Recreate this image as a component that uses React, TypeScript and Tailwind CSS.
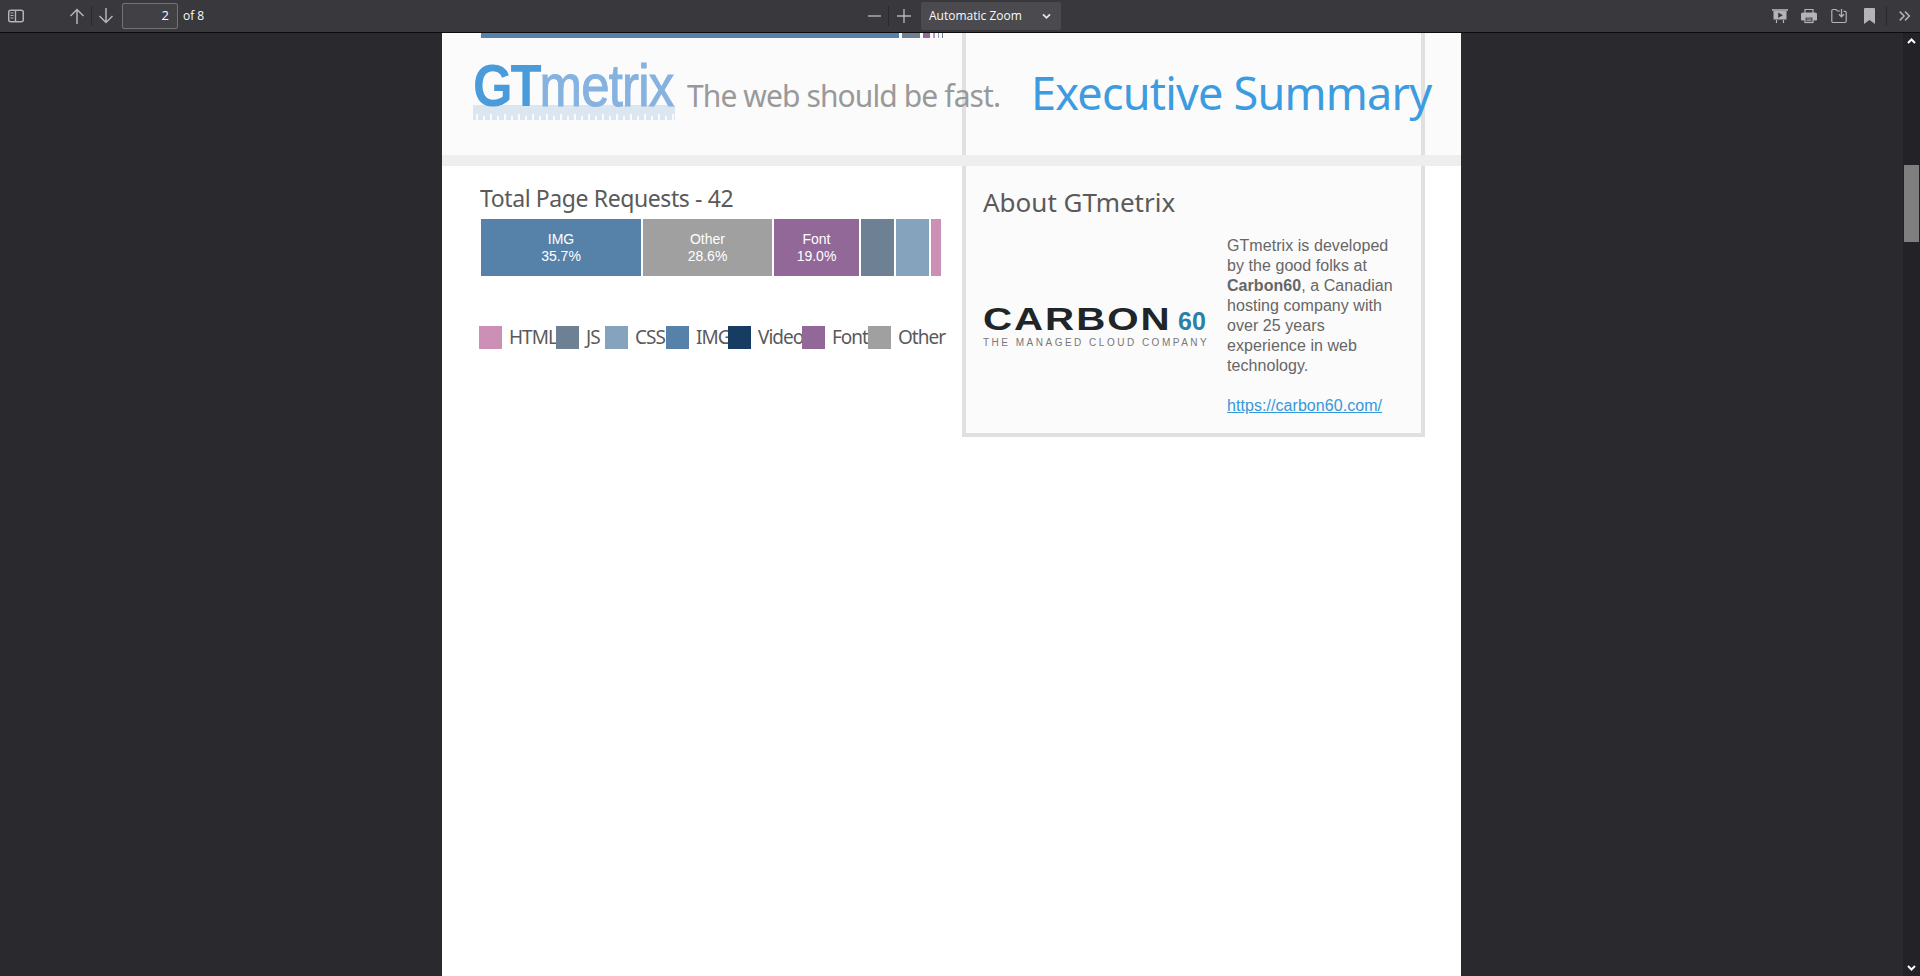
const headingFont = "font-['Noto_Sans',sans-serif]"

const barSegments = [
  { label: 'IMG', pct: '35.7%', color: 'bg-[#5682a9]', width: 'w-[162px]' },
  { label: 'Other', pct: '28.6%', color: 'bg-[#a0a0a0]', width: 'w-[131px]' },
  { label: 'Font', pct: '19.0%', color: 'bg-[#926899]', width: 'w-[87px]' },
  { label: '', pct: '', color: 'bg-[#6e8094]', width: 'w-[35px]' },
  { label: '', pct: '', color: 'bg-[#85a3bc]', width: 'w-[35px]' },
  { label: '', pct: '', color: 'bg-[#cc8fb5]', width: 'w-[10px]' },
]

const legend = [
  { label: 'HTML', color: 'bg-[#cc8fb5]', width: 'w-[47px]' },
  { label: 'JS', color: 'bg-[#6e8094]', width: 'w-[19px]' },
  { label: 'CSS', color: 'bg-[#85a3bc]', width: 'w-[31px]' },
  { label: 'IMG', color: 'bg-[#5682a9]', width: 'w-[32px]' },
  { label: 'Video', color: 'bg-[#173c61]', width: 'w-[44px]' },
  { label: 'Font', color: 'bg-[#926899]', width: 'w-[36px]' },
  { label: 'Other', color: 'bg-[#a0a0a0]', width: 'w-[46px]' },
]

function Icon({ children, className = '' }: { children: React.ReactNode; className?: string }) {
  return (
    <svg viewBox="0 0 16 16" className={`w-4 h-4 shrink-0 text-[#b4b4b6] ${className}`} fill="none" stroke="currentColor" strokeWidth="1.2">
      {children}
    </svg>
  )
}

function Toolbar() {
  return (
    <div className="h-[33px] shrink-0 flex items-center bg-[#38383d] border-b border-[#0c0c0d] relative text-[#f9f9fa] text-xs font-['Open_Sans',sans-serif]">
      <div className="flex items-center flex-1">
        <Icon className="ml-2">
          <rect x="0.7" y="2.2" width="14.6" height="11.6" rx="2" strokeWidth="1.5" />
          <path d="M7.5 2.2v11.6" strokeWidth="1.4" />
          <path d="M2.500 5h3M2.500 7.500h3M2.500 10h3" strokeWidth="1.1" />
        </Icon>
        <Icon className="ml-[45px]">
          <path d="M8 16V1.500M1.500 8 8 1.500 14.500 8" strokeWidth="1.5" />
        </Icon>
        <div className="w-px h-5 bg-[#2a2a2e] mx-[6px]" />
        <Icon>
          <path d="M8 0v14.500M1.500 8 8 14.500 14.500 8" strokeWidth="1.5" />
        </Icon>
        <div className="ml-2 w-[56px] h-[26px] border border-[#737373] rounded-[2px] bg-[#404045] flex items-center justify-end pr-2 text-[13px]">2</div>
        <span className="ml-[5px]">of 8</span>
      </div>

      <div className="absolute left-[867px] top-0 h-full flex items-center">
        <Icon>
          <path d="M1 8h13" strokeWidth="1.4" />
        </Icon>
        <div className="w-px h-5 bg-[#2a2a2e] ml-[5px] mr-[7px]" />
        <Icon>
          <path d="M1 8h14M8 1v14" strokeWidth="1.4" />
        </Icon>
        <div className="ml-[9px] w-[140px] h-[28px] bg-[#4a4a4f] rounded-[2px] flex items-center justify-between pl-2 pr-[10px]">
          <span>Automatic Zoom</span>
          <svg viewBox="0 0 10 8" className="w-[9px] h-[7px] text-[#e8e8e8]" fill="none" stroke="currentColor" strokeWidth="2">
            <path d="M1 1.500 5 5.500l4-4" />
          </svg>
        </div>
      </div>

      <div className="flex items-center pr-[8px]">
        <Icon className="mr-[13px]">
          <path d="M0 2h16" strokeWidth="1.6" />
          <rect x="1.500" y="3" width="13" height="8.500" fill="currentColor" stroke="none" />
          <path d="M6.200 4.500v5.500l4.600-2.700z" fill="#38383d" stroke="none" />
          <path d="M4.500 12v3M11.500 12v3" strokeWidth="1.2" />
        </Icon>
        <Icon className="mr-[14px]">
          <path d="M4 5V1.500h8V5" />
          <path d="M3.500 12H1.500a1 1 0 0 1-1-1V6.500a1.500 1.500 0 0 1 1.500-1.500h12a1.500 1.500 0 0 1 1.500 1.500V11a1 1 0 0 1-1 1h-2" fill="currentColor" />
          <rect x="4" y="9" width="8" height="5.500" fill="#38383d" />
          <path d="M5.500 11h5M5.500 12.700h5" strokeWidth="0.9" />
        </Icon>
        <Icon className="mr-[17px]">
          <path d="M9 3H6.500L5 1.500H2a1.200 1.200 0 0 0-1.200 1.200v10.600A1.200 1.200 0 0 0 2 14.500h12a1.200 1.200 0 0 0 1.200-1.200V4.500A1.200 1.200 0 0 0 14 3.300h-1.500" />
          <path d="M10.500 1v7.500M8 6.200l2.500 2.600L13 6.200" strokeWidth="1.3" />
        </Icon>
        <svg viewBox="0 0 11 16" className="w-[11px] h-4 text-[#b4b4b6] mr-[11px]" fill="currentColor">
          <path d="M0 1a1 1 0 0 1 1-1h9a1 1 0 0 1 1 1v15l-5.500-4L0 16z" />
        </svg>
        <div className="w-px h-5 bg-[#2a2a2e] mr-[11px]" />
        <Icon className="w-[14px]">
          <path d="M2 3l5 5-5 5M8 3l5 5-5 5" strokeWidth="1.7" />
        </Icon>
      </div>
    </div>
  )
}

function Scrollbar() {
  return (
    <div className="w-[17px] shrink-0 bg-[#232327] flex flex-col items-center justify-between relative">
      <svg viewBox="0 0 9 6" className="w-[9px] h-[6px] mt-[5px] text-white" fill="none" stroke="currentColor" strokeWidth="2">
        <path d="M1 5l3.500-3.500L8 5" />
      </svg>
      <div className="absolute top-[132px] left-px w-[15px] h-[77px] bg-[#7f7f7f]" />
      <svg viewBox="0 0 9 6" className="w-[9px] h-[6px] mb-[5px] text-white" fill="none" stroke="currentColor" strokeWidth="2">
        <path d="M1 1l3.500 3.500L8 1" />
      </svg>
    </div>
  )
}

function GtmetrixLogo() {
  return (
    <div className="w-[202px] h-[62px] shrink-0 relative font-['Liberation_Sans',sans-serif]">
      <svg viewBox="0 0 202 15" className="absolute left-0 bottom-0 w-[202px] h-[15px]">
        <rect width="202" height="15" fill="#dbe6f1" />
        {Array.from({ length: 29 }, (_, i) => (
          <rect key={i} x={3 + i * 7} y={i % 2 ? 11 : 9} width="2" height={i % 2 ? 4 : 6} fill="#fbfbfb" />
        ))}
      </svg>
      <div className="relative text-[60px] leading-[56px] whitespace-nowrap origin-left scale-x-[0.85]">
        <span className="font-bold tracking-[-2.5px] text-[#4a9bd9]">GT</span>
        <span className="tracking-[-1px] text-[#86b2e0] [-webkit-text-stroke:1px_#86b2e0]">metrix</span>
      </div>
    </div>
  )
}

function CarbonLogo() {
  return (
    <div className="w-[225px] shrink-0 font-['Liberation_Sans',sans-serif]">
      <div className="flex items-baseline h-[28px] leading-none whitespace-nowrap font-bold">
        <span className="inline-block w-[195px] text-[31px] tracking-[1.5px] text-[#222528] origin-left scale-x-[1.3]">CARBON</span>
        <span className="text-[25px] text-[#2b80a6]">60</span>
      </div>
      <div className="mt-[5px] text-[10px] leading-[11px] tracking-[2.5px] text-[#777] whitespace-nowrap">
        THE MANAGED CLOUD COMPANY
      </div>
    </div>
  )
}

function ReportHeader() {
  return (
    <div className="h-[133px] shrink-0 relative bg-[#fbfbfb] border-b-[11px] border-[#eeeeec]">
      {/* tail of the chart from the previous page */}
      <div className="flex h-[5px] ml-[39px] gap-[3px]">
        <div className="w-[418px] bg-[#5682a9]" />
        <div className="w-[18px] bg-[#6e8094]" />
        <div className="w-[7px] bg-[#926899]" />
        <div className="w-[2px] bg-[#cc8fb5]" />
        <div className="w-[1px] bg-[#85a3bc]" />
        <div className="w-[1px] bg-[#6e8094]" />
      </div>
      {/* panel edges of the previous page showing through */}
      <div className="absolute left-[520px] top-0 bottom-0 w-1 bg-[#e0e0e0]" />
      <div className="absolute left-[979px] top-0 bottom-0 w-1 bg-[#e0e0e0]" />
      <div className="relative flex items-start pl-[31px] pt-[20px]">
        <GtmetrixLogo />
        <span className={`ml-[12px] mt-[20px] text-[30px] leading-9 tracking-[-0.9px] text-[#999] whitespace-nowrap ${headingFont}`}>The web should be fast.</span>
        <span className={`absolute left-[589px] top-[27px] text-[45px] leading-[56px] tracking-[-0.8px] text-[#3d9be0] whitespace-nowrap ${headingFont}`}>Executive Summary</span>
      </div>
    </div>
  )
}

function RequestsChart() {
  return (
    <div className="w-[520px] shrink-0 pl-[38px]">
      <h2 className={`mt-[18px] text-[23px] leading-7 tracking-[-0.4px] text-[#5a5a5a] whitespace-nowrap ${headingFont}`}>Total Page Requests - 42</h2>
      <div className="mt-[7px] ml-px flex h-[57px]">
        {barSegments.map((s, i) => (
          <div key={i} className={`${s.width} ${s.color} border-r-2 border-white last:border-r-0 flex flex-col items-center justify-center text-sm leading-[17px] text-white font-['Liberation_Sans',sans-serif]`}>
            {s.label && <span>{s.label}</span>}
            {s.pct && <span>{s.pct}</span>}
          </div>
        ))}
      </div>
      <div className="mt-[47px] ml-[-1px] flex items-center whitespace-nowrap">
        {legend.map((l) => (
          <div key={l.label} className="flex items-center">
            <div className={`w-[23px] h-[23px] ${l.color}`} />
            <span className={`${l.width} ml-[7px] text-[19px] tracking-[-1px] text-[#5a5a5a] ${headingFont}`}>{l.label}</span>
          </div>
        ))}
      </div>
    </div>
  )
}

function AboutPanel() {
  return (
    <div className="w-[463px] h-[271px] border-x-4 border-b-4 border-[#e0e0e0] bg-[#fbfbfb] pl-[17px]">
      <h2 className={`mt-[18px] text-[26px] leading-9 text-[#5a5a5a] ${headingFont}`}>About GTmetrix</h2>
      <div className="flex items-center mt-[16px]">
        <CarbonLogo />
        <div className="ml-[19px] w-[175px] text-base leading-5 tracking-[0.06px] text-[#666] font-['Liberation_Sans',sans-serif]">
          GTmetrix is developed by the good folks at <b>Carbon60</b>, a Canadian hosting company with over 25 years experience in web technology.
          <br />
          <br />
          <a href="#" className="text-[#3498db] underline">https://carbon60.com/</a>
        </div>
      </div>
    </div>
  )
}

export default function App() {
  return (
    <div className="h-[976px] flex flex-col overflow-hidden bg-[#2a2a2e]">
      <Toolbar />
      <div className="flex-1 flex min-h-0">
        <div className="flex-1 flex justify-center overflow-hidden">
          <div className="w-[1019px] bg-white flex flex-col">
            <ReportHeader />
            <div className="flex">
              <RequestsChart />
              <AboutPanel />
            </div>
          </div>
        </div>
        <Scrollbar />
      </div>
    </div>
  )
}
